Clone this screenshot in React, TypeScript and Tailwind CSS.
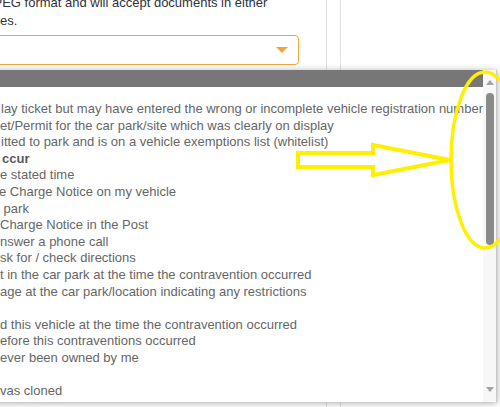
import React from "react";

const rows: { t: string; ml: number; bold?: boolean }[] = [
  { t: "lay ticket but may have entered the wrong or incomplete vehicle registration number", ml: 1 },
  { t: "et/Permit for the car park/site which was clearly on display", ml: 0 },
  { t: "itted to park and is on a vehicle exemptions list (whitelist)", ml: 1 },
  { t: "ccur", ml: 2, bold: true },
  { t: "e stated time", ml: 0 },
  { t: "e Charge Notice on my vehicle", ml: -1 },
  { t: " park", ml: 0 },
  { t: "Charge Notice in the Post", ml: 0 },
  { t: "nswer a phone call", ml: 0 },
  { t: "sk for / check directions", ml: 0 },
  { t: "t in the car park at the time the contravention occurred", ml: 0 },
  { t: "age at the car park/location indicating any restrictions", ml: 0 },
  { t: "", ml: 0 },
  { t: "d this vehicle at the time the contravention occurred", ml: 0 },
  { t: "efore this contraventions occurred", ml: 0 },
  { t: "ever been owned by me", ml: 0 },
  { t: "", ml: 0 },
  { t: "vas cloned", ml: 0 },
];

export default function App() {
  return (
    <div className="relative w-[500px] h-[407px] overflow-hidden bg-white [font-family:'Liberation_Sans',Arial,sans-serif]">
      {/* page background */}
      <div className="flex h-full">
        <div className="w-[327px] shrink-0 border-r border-[#e2e2e2] overflow-hidden">
          <div className="mt-[-6px] text-[13px] leading-[18px] text-[#2f3140]">
            <div className="whitespace-nowrap ml-[-13px]">JPEG format and will accept documents in either</div>
            <div className="whitespace-nowrap">es.</div>
          </div>
          <div className="mt-[5px] ml-[-10px] w-[309px] h-[30px] rounded-[4px] border border-[#f3a53a] bg-white flex items-center justify-end pr-[10px]">
            <svg width="12" height="7" viewBox="0 0 12 7">
              <polygon points="0,0 12,0 6,6" fill="#f3a53a" />
            </svg>
          </div>
        </div>
        <div className="ml-[13px] flex-1 border-l border-[#e2e2e2]" />
      </div>

      {/* dropdown list overlay */}
      <div className="absolute left-[-10px] top-[70px] w-[507px] h-[332px] bg-white flex border-r border-[#c8c8c8] shadow-[0_1px_7px_rgba(0,0,0,0.35)]">
        <div className="flex-1 flex flex-col overflow-hidden">
          <div className="h-[17px] bg-[#777777] shrink-0" />
          <div className="pt-[14px] pl-[10px] text-[13px] leading-[16.6px] text-[#666666]">
            {rows.map((r, i) => (
              <div
                key={i}
                className={`whitespace-pre h-[16.6px] ${r.bold ? "font-bold text-[#5a5a5a]" : ""}`}
                style={{ marginLeft: r.ml }}
              >
                {r.t}
              </div>
            ))}
          </div>
        </div>
        <div className="w-[13px] shrink-0 bg-[#f7f7f7] flex flex-col items-center pt-[10px] pb-[10px]">
          <svg width="8" height="5" viewBox="0 0 8 5">
            <polygon points="0,5 8,5 4,0" fill="#a3a3a3" />
          </svg>
          <div className="mt-[8px] w-[8px] h-[152px] rounded-full bg-[#8a8a8a]" />
          <div className="flex-1" />
          <svg width="8" height="5" viewBox="0 0 8 5">
            <polygon points="0,0 8,0 4,5" fill="#a3a3a3" />
          </svg>
        </div>
      </div>

      {/* yellow annotation */}
      <svg className="absolute left-0 top-0 pointer-events-none" width="500" height="407" viewBox="0 0 500 407">
        <polygon
          points="298,153 373,153 373,145 450,160 373,175 373,167 298,167"
          fill="none"
          stroke="#ffef00"
          strokeWidth="4"
          strokeLinejoin="miter"
        />
        <ellipse cx="485" cy="160" rx="34" ry="88" fill="none" stroke="#ffef00" strokeWidth="3.5" />
      </svg>
    </div>
  );
}
